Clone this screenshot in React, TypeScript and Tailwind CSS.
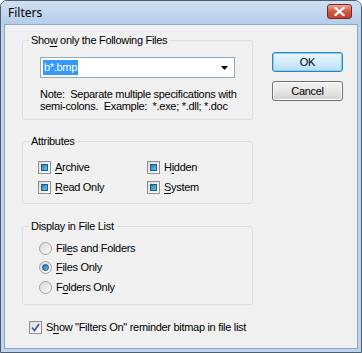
import React from 'react';

const font = { fontFamily: '"Liberation Sans", Arial, sans-serif' };

function U({ children }: { children: React.ReactNode }) {
  return <span className="underline underline-offset-[2px]">{children}</span>;
}

function MixedBox() {
  return (
    <span className="w-[13px] h-[13px] border border-[#8f8f8f] bg-gradient-to-br from-[#dcdcdc] to-[#ffffff] p-[2px] flex shrink-0">
      <span className="flex-1 border border-[#1f5a87] bg-gradient-to-br from-[#2f74a8] via-[#4aa3cf] to-[#62c4e6]" />
    </span>
  );
}

function CheckedBox() {
  return (
    <span className="w-[13px] h-[13px] border border-[#8f8f8f] bg-gradient-to-br from-[#dcdcdc] to-[#ffffff] flex items-center justify-center shrink-0">
      <svg width="9" height="9" viewBox="0 0 9 9">
        <path d="M1 4.5 L3.5 7.5 L8 1" fill="none" stroke="#4a5f97" strokeWidth="1.8" />
      </svg>
    </span>
  );
}

function Radio({ on }: { on?: boolean }) {
  return (
    <span className="w-[13px] h-[13px] rounded-full border border-[#a0a0a0] bg-gradient-to-br from-[#d8d8d8] to-[#fbfbfb] flex items-center justify-center shrink-0">
      {on && <span className="w-[7px] h-[7px] rounded-full border border-[#194b7a] bg-gradient-to-br from-[#2a6ea8] to-[#6cc2ea]" />}
    </span>
  );
}

function Group({ label, children, className = '' }: { label: React.ReactNode; children: React.ReactNode; className?: string }) {
  return (
    <fieldset className={`border border-[#d5dfe5] rounded-[3px] px-[6px] ${className}`}>
      <legend className="px-[2px] text-[11px] leading-[13px]">{label}</legend>
      {children}
    </fieldset>
  );
}

export default function App() {
  return (
    <div style={font} className="w-[362px] h-[353px] flex flex-col bg-[#bed4ec] border border-[#4d5e72] rounded-t-[7px] overflow-hidden text-black select-none">
      {/* Title bar */}
      <div className="h-[23px] flex items-center justify-between pl-[7px] pr-[9px] bg-gradient-to-b from-[#cfe0f2] to-[#b5cde9]">
        <span className="text-[12px] leading-none" style={{ fontFamily: '"Noto Sans", "Open Sans", sans-serif' }}>Filters</span>
        <button className="w-[25px] h-[15px] mt-[-3px] rounded-[3px] border border-[#6b2a22] bg-gradient-to-b from-[#e9a99b] via-[#d2563f] to-[#c7452f] flex items-center justify-center">
          <svg width="11" height="9" viewBox="0 0 11 9">
            <path d="M1.5 1 L9.5 8 M9.5 1 L1.5 8" stroke="#ffffff" strokeWidth="2.2" strokeLinecap="square" />
          </svg>
        </button>
      </div>

      {/* Client area */}
      <div className="flex-1 flex px-[3px] pb-[3px]">
        <div className="flex-1 flex bg-[#f0f0f0] border border-[#8ba6c6] pl-[17px] pt-[9px] text-[11px] tracking-[-0.3px]">
          <div className="w-[231px] shrink-0 flex flex-col">
            <Group label={<>Sho<U>w</U> only the Following Files</>} className="pb-[7px]">
              <div className="mt-[10px] mx-[11px] h-[21px] border border-[#8fa9c7] bg-white flex items-center pl-[2px] pr-[6px]">
                <span className="bg-[#3399ff] text-white leading-[15px] px-[1px]">b*.bmp</span>
                <span className="flex-1" />
                <svg width="7" height="4" viewBox="0 0 7 4">
                  <path d="M0 0 H7 L3.5 4 Z" fill="#000" />
                </svg>
              </div>
              <p className="mt-[10px] ml-[11px] leading-[12px] whitespace-nowrap">
                Note:&nbsp; Separate multiple specifications with
                <br />
                semi-colons.&nbsp; Example:&nbsp; *.exe; *.dll; *.doc
              </p>
            </Group>

            <Group label="Attributes" className="mt-[15px] pb-[6px]">
              <div className="mt-[9px] ml-[9px] grid grid-cols-[109px_1fr]">
                <label className="h-[20px] flex items-center gap-[4px]"><MixedBox /><span><U>A</U>rchive</span></label>
                <label className="h-[20px] flex items-center gap-[4px]"><MixedBox /><span>H<U>i</U>dden</span></label>
                <label className="h-[20px] flex items-center gap-[4px]"><MixedBox /><span><U>R</U>ead Only</span></label>
                <label className="h-[20px] flex items-center gap-[4px]"><MixedBox /><span><U>S</U>ystem</span></label>
              </div>
            </Group>

            <Group label="Display in File List" className="mt-[16px] pb-[7px]">
              <div className="mt-[5px] ml-[10px] flex flex-col">
                <label className="h-[20px] flex items-center gap-[4px]"><Radio /><span>Fil<U>e</U>s and Folders</span></label>
                <label className="h-[19px] flex items-center gap-[4px]"><Radio on /><span><U>F</U>iles Only</span></label>
                <label className="h-[20px] flex items-center gap-[4px]"><Radio /><span>F<U>o</U>lders Only</span></label>
              </div>
            </Group>

            <label className="mt-[12px] ml-[7px] h-[20px] flex items-center gap-[4px] whitespace-nowrap">
              <CheckedBox />
              <span>S<U>h</U>ow "Filters On" reminder bitmap in file list</span>
            </label>
          </div>

          <div className="ml-[19px] mt-[18px] flex flex-col gap-[9px]">
            <button className="w-[71px] h-[20px] rounded-[3px] border border-[#3c7fb1] bg-gradient-to-b from-[#e9f6fd] via-[#d3ecfb] to-[#b7def5] shadow-[inset_0_0_0_1px_#7fd0f5] text-[11px]">
              OK
            </button>
            <button className="w-[71px] h-[20px] rounded-[3px] border border-[#707070] bg-gradient-to-b from-[#f3f3f3] via-[#e6e6e6] to-[#d2d2d2] shadow-[inset_0_0_0_1px_#fcfcfc] text-[11px]">
              Cancel
            </button>
          </div>
        </div>
      </div>
    </div>
  );
}
